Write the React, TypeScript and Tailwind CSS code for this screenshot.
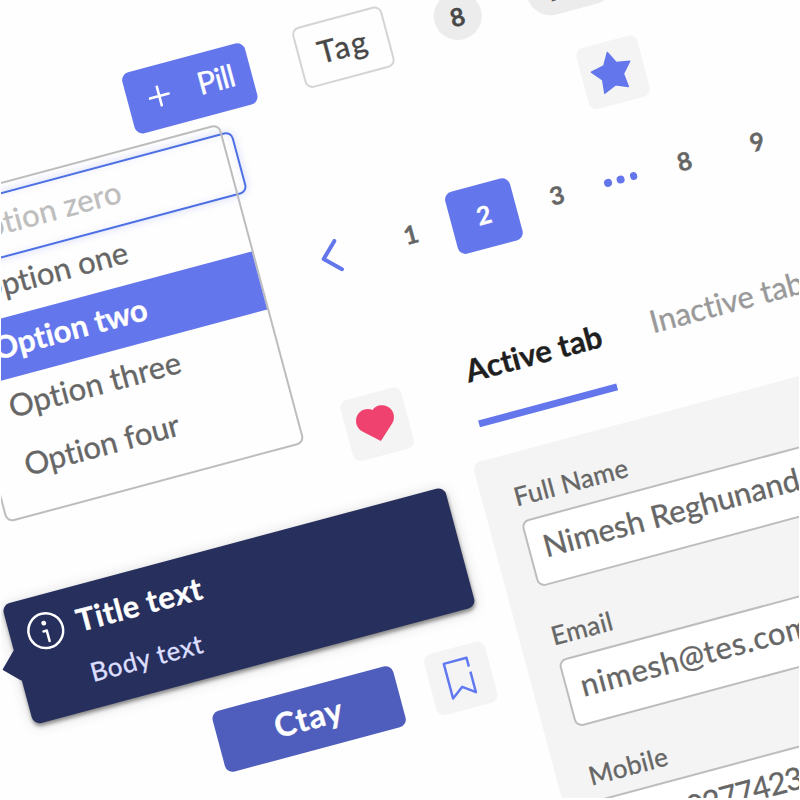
import type { ReactNode } from "react";

const options = [
  { label: "Option zero", style: "text-[#bdbdbd] tracking-[0.2px]" },
  { label: "Option one", style: "text-[#666666]" },
  { label: "Option two", style: "bg-[#6376ec] font-bold text-white" },
  { label: "Option three", style: "text-[#666666] tracking-[0.2px]" },
  { label: "Option four", style: "text-[#666666]" },
];

const fields = [
  { label: "Full Name", value: "Nimesh Reghunandan", tracking: "tracking-normal" },
  { label: "Email", value: "nimesh@tes.com", tracking: "tracking-[0.6px]" },
  { label: "Mobile", value: "+44 0277423", tracking: "tracking-[-1px] [word-spacing:13px]" },
];

function Chips() {
  return (
    <div className="absolute left-[97px] top-[102.8px] flex items-center">
      <div className="flex h-[63px] w-[127px] items-center rounded-lg bg-[#6376ec] pb-[3px] pl-[21px] text-white">
        <svg className="mt-[3px] h-[22px] w-[22px]" viewBox="0 0 22 22" fill="none" stroke="currentColor" strokeWidth="2.6" strokeLinecap="round">
          <path d="M11 1.3v19.4M1.3 11h19.4" />
        </svg>
        <span className="ml-[29px] tracking-[-0.8px]">Pill</span>
      </div>
      <div className="ml-[49px] flex h-[63px] w-[92.5px] items-center justify-center rounded-lg border-2 border-[#d4d4d4] pb-[2px] tracking-[1.8px] text-[#484848]">
        Tag
      </div>
      <div className="ml-[48px] flex h-12 w-12 items-center justify-center rounded-full bg-[#ececec] text-[25px] font-bold text-[#484848]">
        8
      </div>
      <div className="ml-[48.5px] flex h-12 w-[90px] items-center rounded-full bg-[#ececec] pl-5 text-[25px] font-bold text-[#484848]">
        99+
      </div>
    </div>
  );
}

function Dropdown() {
  return (
    <>
      <div className="absolute left-[-139px] top-[186.2px] h-[63.5px] w-[329px] rounded-lg border-2 border-[#4d6fe4] shadow-[0_0_9px_rgba(99,118,236,0.28),inset_0_0_7px_rgba(99,118,236,0.12)]" />
      <ul className="absolute left-[-129px] top-[176.2px] h-[331px] w-[309px] rounded-lg border-2 border-[#bdbdbd] pt-[9.8px]">
        {options.map((o) => (
          <li key={o.label} className={`flex h-[60px] items-center pb-[5px] pl-[30.5px] ${o.style}`}>
            {o.label}
          </li>
        ))}
      </ul>
    </>
  );
}

function Tile({ children, className }: { children: ReactNode; className: string }) {
  return (
    <div className={`h-[62.5px] w-[62.5px] rounded-lg bg-[#f4f4f4] ${className}`}>
      <svg viewBox="0 0 63 63" className="h-full w-full">
        {children}
      </svg>
    </div>
  );
}

function Pagination() {
  const cell = "flex h-16 w-[75.5px] items-center justify-center pb-[3px]";
  return (
    <nav className="absolute left-[243px] top-[301.8px] flex items-center text-[25px] font-bold text-[#666666]">
      <svg className="mr-[35.5px] h-[34px] w-5" viewBox="0 0 20 34" fill="none" stroke="#6376ec" strokeWidth="4" strokeLinecap="round" strokeLinejoin="round">
        <path d="M17.6 2.3L2.6 17l15 14.6" />
      </svg>
      <span className={cell}>1</span>
      <span className="flex h-16 w-[75.5px] justify-center">
        <span className="flex h-16 w-[67px] items-center justify-center rounded-lg bg-[#6376ec] pb-[3px] text-white">2</span>
      </span>
      <span className={cell}>3</span>
      <span className="flex w-[56.5px] justify-center gap-[5.4px]">
        <i className="h-[7.8px] w-[7.8px] rounded-full bg-[#6376ec]" />
        <i className="h-[7.8px] w-[7.8px] rounded-full bg-[#6376ec]" />
        <i className="h-[7.8px] w-[7.8px] rounded-full bg-[#6376ec]" />
      </span>
      <span className={cell}>8</span>
      <span className={cell}>9</span>
    </nav>
  );
}

function Tabs() {
  return (
    <div className="absolute left-[352.8px] top-[449.2px] flex gap-[48.5px]">
      <div className="flex h-[88.3px] w-[143.2px] flex-col justify-between border-b-[7.5px] border-[#6376ec]">
        <span className="pl-px font-bold leading-[60px] text-[#1f1f1f]">Active tab</span>
      </div>
      <span className="leading-[60px] text-[#999999]">Inactive tab</span>
    </div>
  );
}

function Form() {
  return (
    <form className="absolute left-[336px] top-[569.6px] h-[500px] w-[520px] rounded-lg bg-[#f4f4f4] pl-[32px] pt-[29.2px] text-[#666666]">
      {fields.map((f) => (
        <label key={f.label} className="block h-[144.5px]">
          <span className="block h-[38.8px] text-[26px] leading-[29px] tracking-[0.3px]">{f.label}</span>
          <span className={`flex h-[69.5px] w-[460px] items-center rounded-lg border-2 border-[#bdbdbd] bg-white pb-[8px] pl-[13.5px] ${f.tracking}`}>
            {f.value}
          </span>
        </label>
      ))}
    </form>
  );
}

function Tooltip() {
  return (
    <div className="absolute left-[-155px] top-[585.4px] h-[123.2px] w-[458px] rounded-lg bg-[#272f5d] shadow-[0_3px_4px_rgba(0,0,0,0.4),0_2px_14px_rgba(0,0,0,0.16)]">
      <svg className="absolute left-[-15.6px] top-[46.5px] h-[31px] w-5" viewBox="0 0 20 31">
        <path d="M20 0H15.6L0 15.5 15.6 31H20z" fill="#272f5d" />
      </svg>
      <div className="flex pl-[17px] pt-[17px]">
        <svg className="h-[38px] w-[38px]" viewBox="0 0 38 38" fill="none" stroke="white" strokeWidth="2.5" strokeLinecap="round" strokeLinejoin="round">
          <circle cx="19" cy="19" r="17.4" />
          <circle cx="19" cy="11.2" r="2.4" fill="white" stroke="none" />
          <path d="M16.6 19.2H20v10.8" />
        </svg>
        <div className="ml-[13.5px] flex flex-col">
          <span className="font-bold leading-[34px] tracking-[0.4px] text-white">Title text</span>
          <span className="mt-[21.5px] text-[26px] leading-[30px] tracking-[0.6px] text-[#dcdfff]">Body text</span>
        </div>
      </div>
    </div>
  );
}

function Actions() {
  return (
    <div className="absolute left-[19px] top-[743.2px] flex">
      <button className="flex h-[63px] w-[186.5px] items-center justify-center rounded-lg bg-[#4f5dbc] pb-[2px] text-[32.5px] font-bold tracking-[1px] text-white">
        Ctay
      </button>
      <Tile className="ml-[32.8px]">
        <path
          d="M42.7 21.2V13.2H19V49.4l12-9 11.9 8.8V29"
          fill="none"
          stroke="#6079f2"
          strokeWidth="2.5"
          strokeLinejoin="round"
          strokeLinecap="square"
        />
      </Tile>
    </div>
  );
}

export default function App() {
  return (
    <div className="h-[800px] w-[800px] overflow-hidden bg-white px-px pb-0.5">
      <main className="relative h-[798px] w-[798px] overflow-hidden bg-[#fefefe] text-[31px] leading-none font-['Lato','Open_Sans',sans-serif] [-webkit-text-stroke:0.35px] [font-variant-ligatures:none]">
        <div className="absolute -left-px top-0 h-[1000px] w-[1000px] origin-top-left -rotate-15 whitespace-nowrap">
          <Chips />
          <Dropdown />
          <Tile className="absolute left-[542px] top-[197px]">
            <path
              d="M31.3 11l6 12 13.5 2.4L41.5 35.8l1.4 13.8-11.8-5L18.2 50l1.4-13.6L10.6 26l13.8-3z"
              fill="#6376ec"
              stroke="#6376ec"
              strokeWidth="1.4"
              strokeLinejoin="round"
            />
          </Tile>
          <Pagination />
          <Tabs />
          <Tile className="absolute left-[223px] top-[476px]">
            <path d="M31 16.5a12 12 0 0 1 15.1 18.65L31 49 15.9 35.15A12 12 0 0 1 31 16.5z" fill="#f0426e" />
          </Tile>
          <Form />
          <Tooltip />
          <Actions />
        </div>
      </main>
    </div>
  );
}
